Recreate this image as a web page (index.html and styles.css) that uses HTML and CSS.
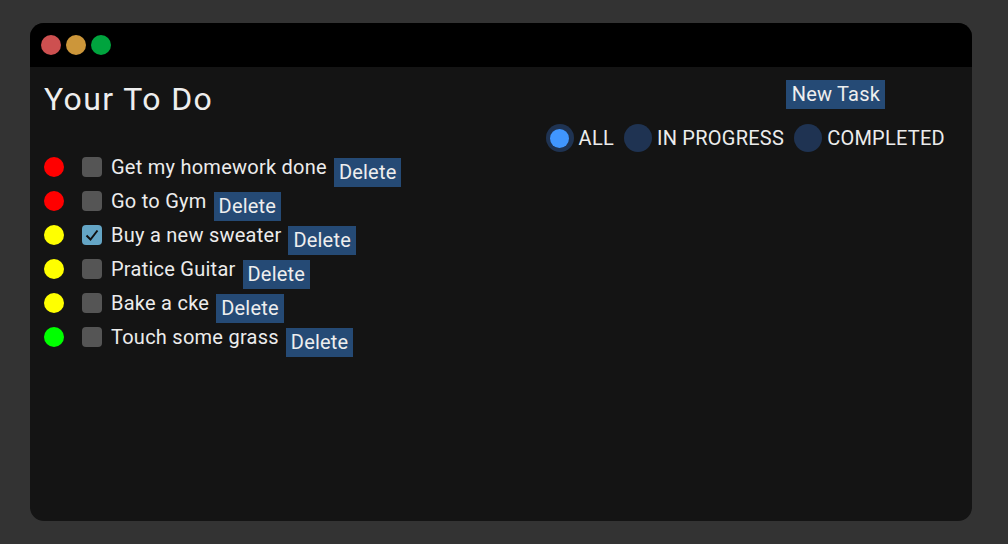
FILE: index.html
```html
<!DOCTYPE html>
<html>
<head>
<meta charset="utf-8">
<link rel="stylesheet" href="styles.css">
</head>
<body>
<div class="window">
  <div class="titlebar">
    <span class="light red"></span>
    <span class="light orange"></span>
    <span class="light green"></span>
  </div>
  <div class="content">
    <div class="left">
      <h1 class="title">Your To Do</h1>
      <ul class="tasks">
        <li class="task"><span class="prio high"></span><span class="check"></span><span class="label">Get my homework done</span><button class="btn del">Delete</button></li>
        <li class="task"><span class="prio high"></span><span class="check"></span><span class="label">Go to Gym</span><button class="btn del">Delete</button></li>
        <li class="task"><span class="prio mid"></span><span class="check on"><svg viewBox="0 0 20 20" width="20" height="20"><path d="M4.5 10.5 L8.5 14.5 L15.5 5.5" fill="none" stroke="#111" stroke-width="2"/></svg></span><span class="label">Buy a new sweater</span><button class="btn del">Delete</button></li>
        <li class="task"><span class="prio mid"></span><span class="check"></span><span class="label">Pratice Guitar</span><button class="btn del">Delete</button></li>
        <li class="task"><span class="prio mid"></span><span class="check"></span><span class="label">Bake a cke</span><button class="btn del">Delete</button></li>
        <li class="task"><span class="prio low"></span><span class="check"></span><span class="label">Touch some grass</span><button class="btn del">Delete</button></li>
      </ul>
    </div>
    <div class="right">
      <button class="btn newtask">New Task</button>
      <div class="filters">
        <span class="radio sel"><span class="dot"></span></span><span class="rlabel">ALL</span>
        <span class="radio"></span><span class="rlabel">IN PROGRESS</span>
        <span class="radio"></span><span class="rlabel">COMPLETED</span>
      </div>
    </div>
  </div>
</div>
</body>
</html>
```
FILE: styles.css
```css
html, body {
  margin: 0;
  padding: 0;
}
body {
  background: #333333;
  width: 1008px;
  height: 544px;
  overflow: hidden;
  font-family: Roboto, "Liberation Sans", sans-serif;
  color: #ececec;
}
.window {
  margin: 23px 36px 0 30px;
  width: 942px;
  height: 498px;
  border-radius: 14px;
  overflow: hidden;
  background: #141414;
}
.titlebar {
  height: 44px;
  background: #000;
  display: flex;
  align-items: center;
  padding-left: 11px;
  gap: 5px;
}
.light {
  width: 20px;
  height: 20px;
  border-radius: 50%;
}
.light.red { background: #cd5050; }
.light.orange { background: #cc963a; }
.light.green { background: #00a43e; }
.content {
  display: flex;
  justify-content: space-between;
  padding: 0 27px 0 14px;
}
.title {
  margin: 13px 0 0 0;
  font-size: 32px;
  font-weight: 400;
  line-height: 38px;
  letter-spacing: 1.4px;
  color: #eeeeee;
}
.tasks {
  list-style: none;
  margin: 32px 0 0 0;
  padding: 0;
}
.task {
  display: flex;
  align-items: center;
  height: 34px;
}
.prio {
  width: 20px;
  height: 20px;
  border-radius: 50%;
  margin-right: 18px;
}
.prio.high { background: #ff0000; }
.prio.mid { background: #ffff00; }
.prio.low { background: #00ff00; }
.check {
  width: 20px;
  height: 20px;
  border-radius: 4px;
  background: #555555;
  margin-right: 9px;
  display: flex;
}
.check.on { background: #64a5c5; }
.label {
  font-size: 20px;
  letter-spacing: 0.25px;
}
.btn {
  font-family: Roboto, "Liberation Sans", sans-serif;
  background: #254a75;
  color: #eeeeee;
  border: none;
  padding: 0 5px;
  height: 29px;
  font-size: 20px;
  line-height: 29px;
  letter-spacing: 0.2px;
}
.del {
  margin-left: 7px;
  margin-top: 10px;
}
.right {
  display: flex;
  flex-direction: column;
  align-items: flex-end;
}
.newtask {
  margin: 13px 60px 0 0;
  padding: 0 5px 0 6px;
}
.filters {
  display: flex;
  align-items: center;
  margin-top: 15px;
  font-size: 20px;
  letter-spacing: 0.25px;
}
.radio {
  width: 28px;
  height: 28px;
  border-radius: 50%;
  background: #1f3352;
  display: flex;
  align-items: center;
  justify-content: center;
  margin-right: 5px;
}
.radio .dot {
  width: 19px;
  height: 19px;
  border-radius: 50%;
  background: #4096ff;
}
.rlabel {
  margin-right: 10px;
}
.rlabel:last-child { margin-right: 0; }
```
